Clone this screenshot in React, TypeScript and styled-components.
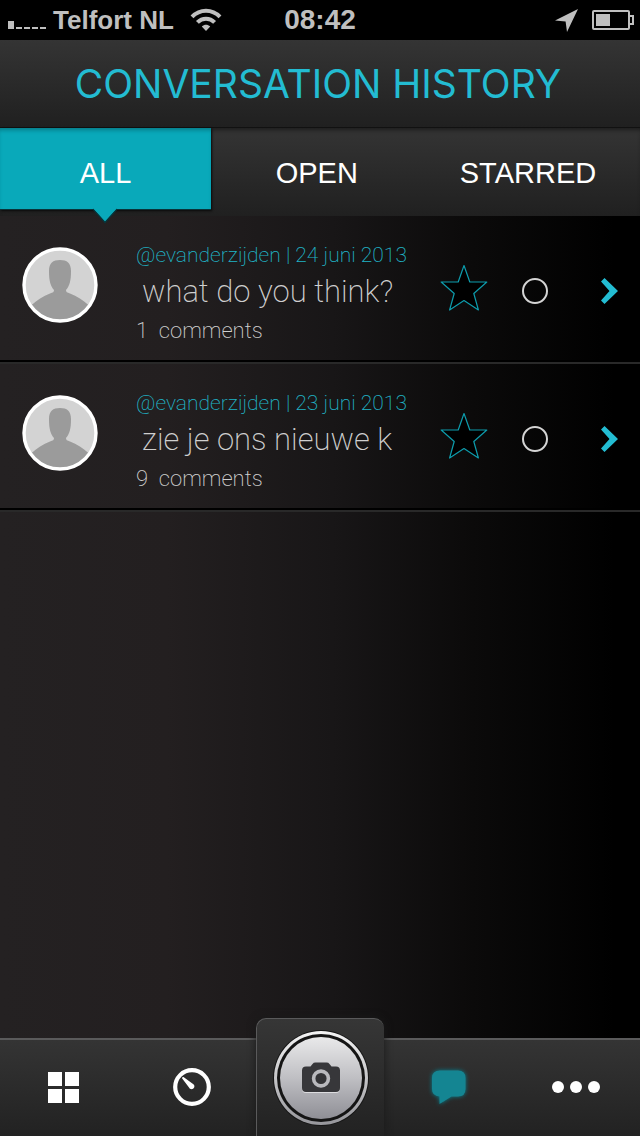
import React, { useState } from "react";
import styled, { createGlobalStyle } from "styled-components";

const GlobalStyle = createGlobalStyle`
  * { box-sizing: border-box; }
  body { margin: 0; background: #000; font-family: Roboto, "Noto Sans", sans-serif; }
  button { padding: 0; border: 0; background: none; color: inherit; font: inherit; cursor: pointer; }
  svg { display: block; }
`;

const Screen = styled.div`
  display: flex;
  flex-direction: column;
  min-height: 100vh;
  background: linear-gradient(90deg, #242122 0%, #231f20 26%, #181617 52%, #0b0a0a 74%, #000 96%);
`;

const StatusBar = styled.div`
  display: grid;
  grid-template-columns: 1fr auto 1fr;
  align-items: center;
  height: 40px;
  padding: 0 6px;
  background: #000;
  color: #bfbfbf;
  font: bold 26px/40px "Liberation Sans", Arial, sans-serif;
`;

const StatusGroup = styled.div<{ $end?: boolean }>`
  display: flex;
  align-items: center;
  justify-content: ${(p) => (p.$end ? "flex-end" : "flex-start")};
  gap: ${(p) => (p.$end ? "14px" : "0")};
  padding-left: 2px;
`;

const Carrier = styled.span`
  margin: 0 16px 0 7px;
`;

const Clock = styled.time`
  font-size: 28px;
`;

const TitleBar = styled.header`
  display: flex;
  align-items: center;
  justify-content: center;
  height: 88px;
  padding-right: 4px;
  border-bottom: 1px solid #111;
  background: linear-gradient(#343434, #202020);
`;

const Title = styled.h1`
  margin: 0;
  color: #23bcd2;
  font: 400 39px/44px Inter, sans-serif;
  white-space: nowrap;
`;

const Tabs = styled.nav`
  display: grid;
  grid-template-columns: 33% 33% 33%;
  height: 88px;
  background: linear-gradient(#343434, #202020);
  box-shadow: inset 0 4px 4px -2px #1c1c1c;
`;

const Tab = styled.button<{ $active: boolean }>`
  position: relative;
  height: 82px;
  padding-top: 9px;
  border-bottom: 1px solid ${(p) => (p.$active ? "#08343a" : "transparent")};
  background: ${(p) => (p.$active ? "#09a9ba" : "none")};
  box-shadow: ${(p) =>
    p.$active ? "inset 0 4px 4px -2px #067985, 1px 1px 2px #0a0a0a" : "none"};
  color: #fff;
  font: 29px/32px "Liberation Sans", Arial, sans-serif;
`;

const Pointer = styled.svg`
  position: absolute;
  top: 100%;
  left: 50%;
  margin: -1px 0 0 -14px;
`;

const List = styled.ul`
  flex: 1;
  margin: 0;
  padding: 0;
  list-style: none;
`;

const Row = styled.li`
  display: flex;
  align-items: center;
  height: 148px;
  padding: 0 22px;
  border-bottom: 2px solid #292929;
  box-shadow: inset 0 -2px #000;
`;

const Picture = styled.div`
  padding-bottom: 8px;
`;

const Body = styled.div`
  flex: 1;
  min-width: 0;
  padding: 10px 0 0 38px;
  font-weight: 200;
  color: #cfcfcf;
  white-space: pre;
`;

const Meta = styled.div`
  color: #20b3c6;
  font-size: 21px;
  line-height: 32px;
`;

const Subject = styled.h2`
  margin: 0;
  padding-left: 6px;
  font-size: 31px;
  font-weight: inherit;
  line-height: 42px;
`;

const Comments = styled.div`
  font-size: 22px;
  line-height: 36px;
`;

const Actions = styled.div`
  display: flex;
  align-items: center;
`;

const StarButton = styled.button`
  padding-bottom: 2px;
`;

const OpenMark = styled.input`
  appearance: none;
  width: 26px;
  height: 26px;
  margin: 4px 52px 0 34px;
  border: 2px solid #d4d4d4;
  border-radius: 50%;
  &:checked { background: #d4d4d4; }
`;

const OpenLink = styled.a`
  margin-top: 4px;
`;

const TabBar = styled.nav`
  display: grid;
  grid-template-columns: repeat(5, 1fr);
  height: 98px;
  border-top: 2px solid #5a5a5b;
  background: linear-gradient(#343434, #222);
`;

const BarButton = styled.button`
  display: flex;
  align-items: center;
  justify-content: center;
  padding-bottom: 2px;
`;

const CameraButton = styled(BarButton)`
  height: 118px;
  margin-top: -22px;
  padding: 0;
  border: solid #5a5a5b;
  border-width: 1px 0 0 1px;
  border-radius: 10px 10px 0 0;
  background: linear-gradient(#363636, #222);
  box-shadow: 0 0 8px #1a1a1a;
`;

const Avatar = () => (
  <svg width="76" height="76" viewBox="0 0 76 76" role="img" aria-label="Profile picture">
    <clipPath id="face"><circle cx="38" cy="38" r="35" /></clipPath>
    <circle cx="38" cy="38" r="36" fill="#d3d3d3" />
    <g clipPath="url(#face)" fill="#9b9b9b">
      <path d="M27 24C27 16 31 13 38 13S49 16 49 24C49 34 47.500 39 44 43C44 45 45 45.500 48 46.500C55 49 61 53 67 58.500V76H9V58.500C15 53 21 49 28 46.500C31 45.500 32 45 32 43C28.500 39 27 34 27 24Z" />
    </g>
    <circle cx="38" cy="38" r="36" fill="none" stroke="#fff" strokeWidth="3.4" />
  </svg>
);

const Star = ({ filled }: { filled: boolean }) => (
  <svg width="48" height="48" viewBox="0 0 48 48">
    <path
      d="M24 1.5L29.8 18H46.8L33.8 29.5L38.4 46L24 36.5L9.6 46L14.2 29.5L1.2 18H18.2Z"
      fill={filled ? "#23bcd2" : "#000"} stroke="#0d9cac" strokeWidth="1.2" strokeLinejoin="round"
    />
  </svg>
);

const conversations = [
  { id: 1, user: "@evanderzijden", date: "24 juni 2013", subject: "what do you think?", count: 1 },
  { id: 2, user: "@evanderzijden", date: "23 juni 2013", subject: "zie je ons nieuwe k", count: 9 },
];

const tabs = ["ALL", "OPEN", "STARRED"];

export default function App() {
  const [active, setActive] = useState("ALL");
  const [starred, setStarred] = useState<number[]>([]);
  const toggle = (id: number) =>
    setStarred((s) => (s.includes(id) ? s.filter((x) => x !== id) : [...s, id]));

  return (
    <Screen>
      <GlobalStyle />
      <StatusBar>
        <StatusGroup>
          <svg width="38" height="18" viewBox="0 0 38 18" fill="#bfbfbf">
            <path d="M0 10h6v8H0zM8 16h6v2H8zM16 16h6v2h-6zM24 16h6v2h-6zM32 16h6v2h-6z" />
          </svg>
          <Carrier>Telfort NL</Carrier>
          <svg width="32" height="24" viewBox="0 0 32 24" fill="none" stroke="#bfbfbf" strokeWidth="4">
            <path d="M2 8.8C10 .6 22 .6 30 8.8" />
            <path d="M7.4 14.4c4.8-5 12.4-5 17.2 0" />
            <path d="M11.8 18.6c2.6-2.4 5.8-2.4 8.4 0L16 23z" fill="#bfbfbf" stroke="none" />
          </svg>
        </StatusGroup>
        <Clock>08:42</Clock>
        <StatusGroup $end>
          <svg width="23" height="23" viewBox="0 0 23 23" fill="#bfbfbf">
            <path d="M23 0L12 23L10.6 12.4L0 11.6z" />
          </svg>
          <svg width="42" height="20" viewBox="0 0 42 20">
            <rect x="1" y="1" width="36" height="18" rx="1" fill="none" stroke="#bfbfbf" strokeWidth="2" />
            <path d="M38 6h3v8h-3" fill="none" stroke="#bfbfbf" strokeWidth="2" />
            <path d="M4 4h14v12H4z" fill="#bfbfbf" />
          </svg>
        </StatusGroup>
      </StatusBar>
      <TitleBar>
        <Title>CONVERSATION HISTORY</Title>
      </TitleBar>
      <Tabs>
        {tabs.map((t) => (
          <Tab key={t} $active={t === active} onClick={() => setActive(t)}>
            {t}
            {t === active && (
              <Pointer width="26" height="16" viewBox="0 0 26 16">
                <path d="M1 1L13 14.4L25 1" fill="#09a9ba" stroke="#08343a" strokeWidth="1.4" />
                <path d="M1 0H25L13 12.8z" fill="#09a9ba" />
              </Pointer>
            )}
          </Tab>
        ))}
      </Tabs>
      <List>
        {conversations.map((c) => (
          <Row key={c.id}>
            <Picture>
              <Avatar />
            </Picture>
            <Body>
              <Meta>{`${c.user} | ${c.date}`}</Meta>
              <Subject>{c.subject}</Subject>
              <Comments>{`${c.count}  comments`}</Comments>
            </Body>
            <Actions>
              <StarButton aria-label="Star conversation" onClick={() => toggle(c.id)}>
                <Star filled={starred.includes(c.id)} />
              </StarButton>
              <OpenMark type="checkbox" aria-label="Mark as open" />
              <OpenLink href="#" aria-label="Open conversation">
                <svg width="18" height="26" viewBox="0 0 18 26">
                  <path d="M4.500 0L18 13L4.500 26L1 22.500L9.500 13L1 3.500z" fill="#23bcd2" />
                </svg>
              </OpenLink>
            </Actions>
          </Row>
        ))}
      </List>
      <TabBar>
        <BarButton aria-label="Overview">
          <svg width="32" height="32" viewBox="0 0 32 32" fill="#fff">
            <path d="M0 1h14v14H0zM17 1h14v14H17zM0 18h14v14H0zM17 18h14v14H17z" />
          </svg>
        </BarButton>
        <BarButton aria-label="Dashboard">
          <svg width="38" height="38" viewBox="0 0 38 38">
            <circle cx="19" cy="19" r="16.8" fill="none" stroke="#fff" strokeWidth="4.2" />
            <path d="M9.2 10.6c-.6-1 .6-2 1.6-1.3l9.6 7c2.4 2 .2 5.6-2.8 4.8-.8-.4-1.2-.8-1.6-1.6z" fill="#fff" />
          </svg>
        </BarButton>
        <CameraButton aria-label="Camera">
          <svg width="96" height="96" viewBox="0 0 96 96">
            <defs>
              <linearGradient id="rim" x2="0" y2="1">
                <stop stopColor="#f4f4f4" />
                <stop offset="1" stopColor="#96969b" />
              </linearGradient>
              <linearGradient id="plate" x2="0" y2="1">
                <stop stopColor="#e9e9ea" />
                <stop offset=".5" stopColor="#bfbfc3" />
                <stop offset="1" stopColor="#8f8f96" />
              </linearGradient>
            </defs>
            <circle cx="48" cy="48" r="48" fill="#151515" />
            <circle cx="48" cy="48" r="47" fill="url(#rim)" />
            <circle cx="48" cy="48" r="44" fill="#151515" />
            <circle cx="48" cy="48" r="41" fill="url(#plate)" />
            <path d="M33 37.5h4.500l2-2.500q1-1.400 3-1.400h11q2 0 3 1.400l2 2.500H63q4 0 4 4V59q0 4-4 4H33q-4 0-4-4V41.500q0-4 4-4z" fill="#dddde0" />
            <path d="M33 36.500h4.500l2-2.500q1-1.400 3-1.400h11q2 0 3 1.400l2 2.500H63q4 0 4 4V58q0 4-4 4H33q-4 0-4-4V40.500q0-4 4-4z" fill="#37373a" />
            <circle cx="48" cy="48.500" r="7.400" fill="#333336" stroke="#b9b9bd" strokeWidth="3.600" />
          </svg>
        </CameraButton>
        <BarButton aria-label="Conversations">
          <svg width="46" height="46" viewBox="0 0 46 46">
            <defs>
              <filter id="glow" x="-20%" y="-20%" width="140%" height="140%">
                <feGaussianBlur stdDeviation="2" />
              </filter>
              <path id="bubble" d="M15 6.500h18q7.500 0 7.500 7.500v11q0 7.500-7.500 7.500h-6.500L14.500 40V32.500Q7 32 7 25V14q0-7.500 8-7.500z" />
            </defs>
            <use href="#bubble" fill="#118493" filter="url(#glow)" />
            <use href="#bubble" fill="#148592" />
          </svg>
        </BarButton>
        <BarButton aria-label="More">
          <svg width="48" height="12" viewBox="0 0 48 12" fill="#fff">
            <circle cx="6" cy="6" r="6" />
            <circle cx="24" cy="6" r="6" />
            <circle cx="42" cy="6" r="6" />
          </svg>
        </BarButton>
      </TabBar>
    </Screen>
  );
}
